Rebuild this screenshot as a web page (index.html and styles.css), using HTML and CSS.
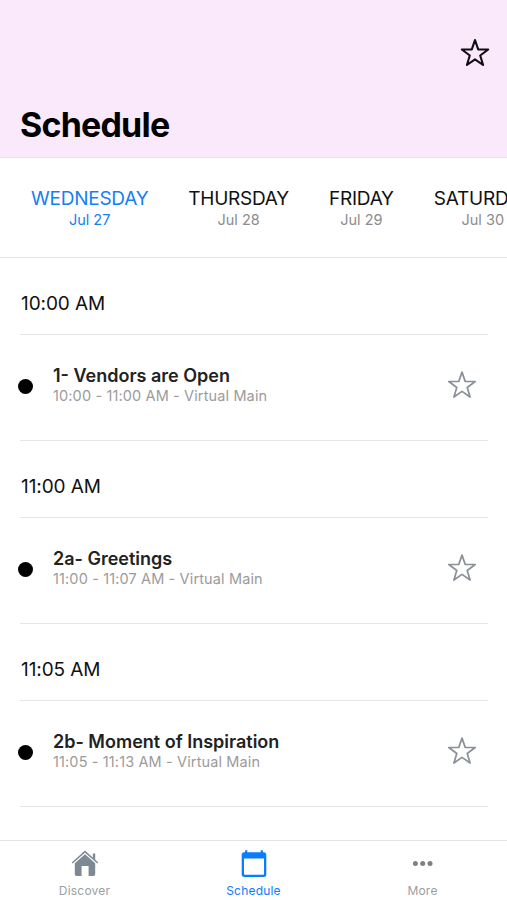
FILE: index.html
```html
<!DOCTYPE html>
<html lang="en">
<head>
  <meta charset="utf-8">
  <title>Schedule</title>
  <link rel="stylesheet" href="styles.css">
</head>
<body>
  <svg class="symbols">
    <symbol id="star" viewBox="0 0 30 30">
      <path d="M15 2.1 L18.2 11.4 L28.2 11.5 L20.2 17.5 L23.1 27 L15 21.4 L6.9 27 L9.8 17.5 L1.8 11.5 L11.8 11.4 Z" fill="none" stroke="currentColor" stroke-linejoin="round"/>
    </symbol>
  </svg>

  <header>
    <svg class="star star-header"><use href="#star"/></svg>
    <h1>Schedule</h1>
  </header>

  <nav class="days">
    <a class="day active"><span class="day-name">WEDNESDAY</span><span class="day-date">Jul 27</span></a>
    <a class="day"><span class="day-name">THURSDAY</span><span class="day-date">Jul 28</span></a>
    <a class="day"><span class="day-name">FRIDAY</span><span class="day-date">Jul 29</span></a>
    <a class="day"><span class="day-name">SATURDAY</span><span class="day-date">Jul 30</span></a>
  </nav>

  <main>
    <h2>10:00 AM</h2>
    <div class="session">
      <span class="dot"></span>
      <div class="info">
        <h3>1- Vendors are Open</h3>
        <p>10:00 - 11:00 AM - Virtual Main</p>
      </div>
      <svg class="star"><use href="#star"/></svg>
    </div>

    <h2>11:00 AM</h2>
    <div class="session">
      <span class="dot"></span>
      <div class="info">
        <h3>2a- Greetings</h3>
        <p>11:00 - 11:07 AM - Virtual Main</p>
      </div>
      <svg class="star"><use href="#star"/></svg>
    </div>

    <h2>11:05 AM</h2>
    <div class="session">
      <span class="dot"></span>
      <div class="info">
        <h3>2b- Moment of Inspiration</h3>
        <p>11:05 - 11:13 AM - Virtual Main</p>
      </div>
      <svg class="star"><use href="#star"/></svg>
    </div>
  </main>

  <footer>
    <a class="tab">
      <svg class="icon" viewBox="0 0 30 30">
        <path d="M2.2 14 L15 2.6 L27.8 14" fill="none" stroke="currentColor" stroke-width="1.5"/>
        <path d="M22.8 4.5 H25.2 V11 L22.8 8.8 Z" fill="currentColor"/>
        <path d="M15 5.2 L25.2 14.2 V25.2 Q25.2 27 23.4 27 H18.6 V17 H11.6 V27 H6.6 Q4.8 27 4.8 25.2 V14.2 Z" fill="currentColor"/>
      </svg>
      <span>Discover</span>
    </a>
    <a class="tab active">
      <svg class="icon" viewBox="0 0 30 30">
        <path d="M6.1 1.3 H8.3 V3.3 H21.7 V1.3 H23.9 V3.3 H24.8 Q27.3 3.3 27.3 5.8 V25.2 Q27.3 27.9 24.8 27.9 H5.2 Q2.7 27.9 2.7 25.2 V5.8 Q2.7 3.3 5.2 3.3 H6.1 Z M5 9.4 V25 Q5 25.8 5.8 25.8 H24.2 Q25 25.8 25 25 V9.4 Z" fill="currentColor" fill-rule="evenodd"/>
      </svg>
      <span>Schedule</span>
    </a>
    <a class="tab more">
      <svg class="icon" viewBox="0 0 30 30">
        <circle cx="7.4" cy="14.5" r="2.5" fill="currentColor"/>
        <circle cx="14.7" cy="14.5" r="2.5" fill="currentColor"/>
        <circle cx="22" cy="14.5" r="2.5" fill="currentColor"/>
      </svg>
      <span>More</span>
    </a>
  </footer>
</body>
</html>
```
FILE: styles.css
```css
* {
  box-sizing: border-box;
}

body {
  margin: 0;
  height: 900px;
  display: flex;
  flex-direction: column;
  overflow: hidden;
  background-color: #fff;
  font-family: Inter, "Liberation Sans", sans-serif;
}

h1, h2, h3, p {
  margin: 0;
}

.symbols {
  display: none;
}

.star {
  width: 30px;
  height: 30px;
  color: #8a9097;
  stroke-width: 1.7;
}

header {
  height: 158px;
  flex-shrink: 0;
  padding: 38px 17px 0 20px;
  background-color: #fae8fb;
  border-bottom: 1px solid #ebe0ec;
  display: flex;
  flex-direction: column;
}

.star-header {
  align-self: flex-end;
  color: #120d14;
  stroke-width: 2.1;
}

h1 {
  margin-top: 37px;
  font-size: 34px;
  line-height: 40px;
  font-weight: 700;
  letter-spacing: -0.8px;
}

.days {
  height: 100px;
  flex-shrink: 0;
  padding: 29px 0 0 31px;
  border-bottom: 1px solid #e6e6e6;
  display: flex;
  gap: 40px;
}

.day {
  flex-shrink: 0;
  display: flex;
  flex-direction: column;
  align-items: center;
  color: #8c8c8c;
}

.day-name {
  font-size: 19px;
  line-height: 24px;
  letter-spacing: -0.24px;
  color: #111;
}

.day-date {
  font-size: 14.5px;
  line-height: 18px;
}

.day.active,
.day.active .day-name {
  color: #1580f5;
}

main {
  flex: 1;
  min-height: 0;
  padding: 0 19px 0 20px;
}

h2 {
  height: 77px;
  padding: 34px 0 0 1px;
  border-bottom: 1px solid #e6e6e6;
  font-size: 19px;
  line-height: 24px;
  font-weight: 400;
  letter-spacing: -0.1px;
  color: #111;
}

.session {
  height: 106px;
  padding: 30px 11px 0 0;
  border-bottom: 1px solid #e6e6e6;
  display: flex;
}

.dot {
  width: 15px;
  height: 15px;
  margin: 14px 20px 0 -2px;
  border-radius: 50%;
  background-color: #000;
}

.info {
  flex: 1;
}

h3 {
  font-size: 18px;
  line-height: 22px;
  font-weight: 600;
  color: #222;
}

p {
  font-size: 14.5px;
  line-height: 18px;
  letter-spacing: 0.13px;
  color: #9b9b9b;
}

.session .star {
  margin-top: 5px;
}

footer {
  height: 60px;
  flex-shrink: 0;
  border-top: 1px solid #e2e2e2;
  display: flex;
}

.tab {
  flex: 1;
  padding-top: 8px;
  display: flex;
  flex-direction: column;
  align-items: center;
  font-size: 12px;
  line-height: 16px;
  letter-spacing: 0.2px;
  color: #9a9fa3;
}

.tab span {
  margin-top: 4px;
}

.icon {
  width: 30px;
  height: 30px;
  color: #7d8a96;
}

.more .icon {
  color: #808080;
}

.tab.active,
.tab.active .icon {
  color: #0a7cff;
}
```
